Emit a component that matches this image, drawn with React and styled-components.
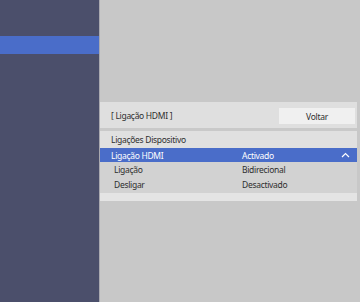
import React from 'react';
import styled, { createGlobalStyle } from 'styled-components';

const GlobalStyle = createGlobalStyle`
  html, body {
    margin: 0;
    padding: 0;
    background: #c8c8c8;
  }
  body {
    font-family: 'Noto Sans', 'Open Sans', sans-serif;
    letter-spacing: -0.3px;
  }
`;

const Screen = styled.div`
  display: flex;
  width: 360px;
  height: 302px;
  overflow: hidden;
  background: #c8c8c8;
`;

const Sidebar = styled.div`
  width: 100px;
  flex-shrink: 0;
  background: #4b4f6b;
  border-right: 1px solid #a9a9b0;
  padding-top: 36px;
  box-sizing: border-box;
`;

const SideItem = styled.div`
  height: 18px;
  background: ${p => (p.active ? '#4a6dc9' : 'transparent')};
`;

const Main = styled.div`
  flex: 1;
  padding: 102px 3px 0 0;
`;

const Panel = styled.div`
  display: flex;
  flex-direction: column;
  background: #d2d2d2;
`;

const Header = styled.div`
  display: flex;
  align-items: center;
  justify-content: space-between;
  height: 26px;
  padding: 0 2px 0 11px;
  background: #dfdfdf;
  border-bottom: 3px solid #c9c9c9;
`;

const Title = styled.span`
  font-size: 8.5px;
  color: #2e2e2e;
  margin-top: 1px;
`;

const BackButton = styled.button`
  width: 76px;
  height: 16px;
  padding: 0;
  border: none;
  background: #f0f0f0;
  font-family: inherit;
  letter-spacing: inherit;
  font-size: 8.5px;
  color: #2e2e2e;
  margin-top: 2px;
`;

const Row = styled.div`
  display: flex;
  align-items: center;
  height: ${p => p.h || 15}px;
  padding-left: ${p => (p.sub ? 14 : 11)}px;
  background: ${p => (p.selected ? '#4a6dc9' : p.light ? '#e0e0e0' : 'transparent')};
  color: ${p => (p.selected ? '#fff' : '#2e2e2e')};
  font-size: 8.5px;
`;

const Label = styled.span`
  width: ${p => (p.sub ? 128 : 131)}px;
`;

const Value = styled.span`
  flex: 1;
`;

const Caret = styled.svg`
  width: 9px;
  height: 6px;
  margin-right: 7px;
`;

const Footer = styled.div`
  height: 8px;
  margin-top: 1px;
  background: #e4e4e4;
`;

const rows = [
  { label: 'Ligação', value: 'Bidirecional' },
  { label: 'Desligar', value: 'Desactivado' },
];

export default function App() {
  return (
    <>
      <GlobalStyle />
      <Screen>
        <Sidebar>
          <SideItem active />
        </Sidebar>
        <Main>
          <Panel>
            <Header>
              <Title>[ Ligação HDMI ]</Title>
              <BackButton>Voltar</BackButton>
            </Header>
            <Row light h={17}>Ligações Dispositivo</Row>
            <Row selected h={14}>
              <Label>Ligação HDMI</Label>
              <Value>Activado</Value>
              <Caret viewBox="0 0 9 6">
                <path d="M1 5 L4.5 1.5 L8 5" fill="none" stroke="#fff" strokeWidth="1.2" />
              </Caret>
            </Row>
            {rows.map(r => (
              <Row sub key={r.label}>
                <Label sub>{r.label}</Label>
                <Value>{r.value}</Value>
              </Row>
            ))}
            <Footer />
          </Panel>
        </Main>
      </Screen>
    </>
  );
}
